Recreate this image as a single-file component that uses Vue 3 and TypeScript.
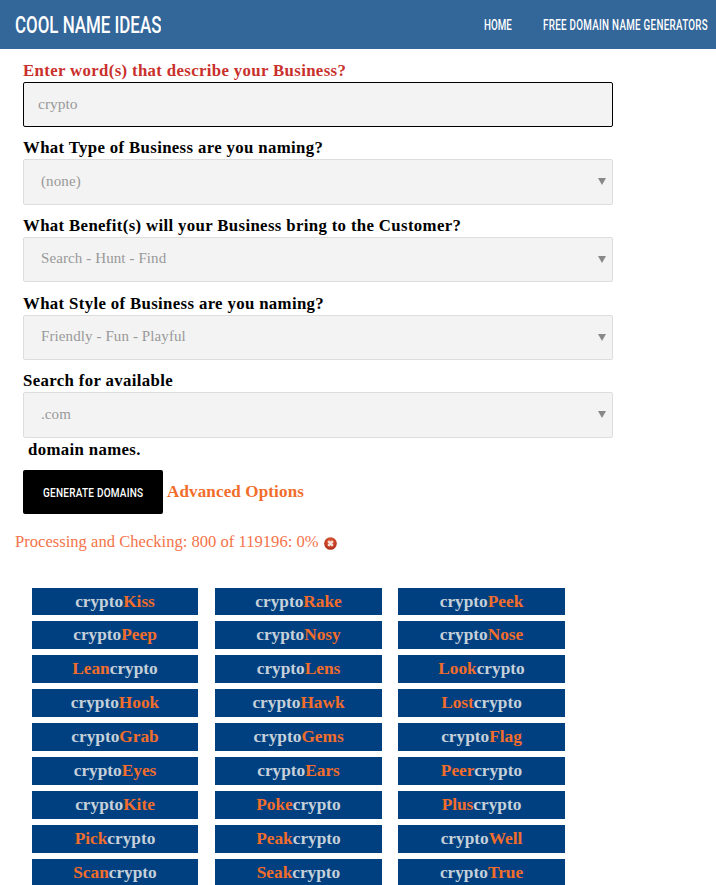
<script setup lang="ts">
interface Name { pre: string; hot: string; after: string }
const raw: string[] = [
  'crypto|Kiss', 'crypto|Rake', 'crypto|Peek',
  'crypto|Peep', 'crypto|Nosy', 'crypto|Nose',
  'Lean|crypto', 'crypto|Lens', 'Look|crypto',
  'crypto|Hook', 'crypto|Hawk', 'Lost|crypto',
  'crypto|Grab', 'crypto|Gems', 'crypto|Flag',
  'crypto|Eyes', 'crypto|Ears', 'Peer|crypto',
  'crypto|Kite', 'Poke|crypto', 'Plus|crypto',
  'Pick|crypto', 'Peak|crypto', 'crypto|Well',
  'Scan|crypto', 'Seak|crypto', 'crypto|True',
]
const names: Name[] = raw.map((r) => {
  const [a, b] = r.split('|')
  return a === 'crypto' ? { pre: a, hot: b, after: '' } : { pre: '', hot: a, after: b }
})
const selects = [
  { label: 'What Type of Business are you naming?', value: '(none)', cls: 'h46', lc: '' },
  { label: 'What Benefit(s) will your Business bring to the Customer?', value: 'Search - Hunt - Find', cls: 'h45', lc: '' },
  { label: 'What Style of Business are you naming?', value: 'Friendly - Fun - Playful', cls: 'h45', lc: 'plus' },
]
</script>

<template>
  <div class="page">
    <header class="bar">
      <a class="brand"><span>COOL NAME IDEAS</span></a>
      <nav class="nav">
        <a class="home"><span>HOME</span></a>
        <a class="free"><span>FREE DOMAIN NAME GENERATORS</span></a>
      </nav>
    </header>
    <form class="form" @submit.prevent>
      <label class="label first">Enter word(s) that describe your Business?</label>
      <input class="text" value="crypto" />
      <template v-for="s in selects" :key="s.label">
        <label class="label" :class="s.lc">{{ s.label }}</label>
        <div class="select" :class="s.cls"><span>{{ s.value }}</span></div>
      </template>
      <label class="label last">Search for available</label>
      <div class="select h46"><span>.com</span></div>
      <div class="suffix">domain names.</div>
      <div class="actions">
        <button class="go" type="button"><span>GENERATE DOMAINS</span></button>
        <a class="adv">Advanced Options</a>
      </div>
    </form>
    <div class="status">
      <span>Processing and Checking: 800 of 119196: 0%</span>
      <svg class="stop" width="13" height="13" viewBox="0 0 14 14">
        <defs>
          <radialGradient id="stopFill" cx="50%" cy="35%" r="70%">
            <stop offset="0" stop-color="#e8603c" />
            <stop offset="1" stop-color="#a82a14" />
          </radialGradient>
        </defs>
        <circle cx="7" cy="7" r="6.8" fill="url(#stopFill)" />
        <path d="M4.5 4.5l5 5M9.5 4.5l-5 5" stroke="#f4e4dc" stroke-width="2.6" />
      </svg>
    </div>
    <div class="grid">
      <div v-for="n in names" :key="n.pre + n.hot + n.after" class="name">
        {{ n.pre }}<span class="hot">{{ n.hot }}</span>{{ n.after }}
      </div>
    </div>
  </div>
</template>

<style scoped>
.page { width: 716px; font-family: "Liberation Serif", serif; }
.bar {
  height: 49px; background: #336699; color: #fff; display: flex;
  align-items: center; justify-content: space-between; padding: 0 8px 0 15px; box-sizing: border-box;
}
.brand, .nav a, .go span { font-family: "Roboto", sans-serif; white-space: nowrap; }
.brand span, .nav span, .go span { display: inline-block; transform-origin: left center; }
.brand, .home, .free { overflow: hidden; }
.brand { font-size: 24.5px; width: 146px; font-weight: 500; }
.brand span { transform: scaleX(0.69); }
.nav { display: flex; gap: 31px; font-size: 14px; font-weight: 500; }
.home { width: 28px; }
.free { width: 165px; letter-spacing: 0.42px; }
.nav span { transform: scaleX(0.7); }
.form { padding: 0 0 0 23px; width: 590px; }
.label {
  display: block; font: 700 16.8px/22px "Liberation Serif", serif; letter-spacing: 0.35px; color: #000;
  height: 22px; margin-top: 10px;
}
.label.first { color: #c9302c; margin-top: 10px; height: 23px; line-height: 23px; }
.label.plus { margin-top: 11px; }
.label.last { margin-top: 10px; }
.text {
  display: block; width: 590px; height: 45px; box-sizing: border-box; margin: 0;
  border: 1px solid #000; border-radius: 2px; background: #f3f3f3; padding: 0 14px 2px;
  font: 15.5px "Liberation Serif", serif; color: #999; outline: none;
}
.select {
  position: relative; box-sizing: border-box; border: 1px solid #ddd; border-radius: 2px;
  background: #f3f3f3; padding: 0 17px 2px; display: flex; align-items: center;
  font: 15px "Liberation Serif", serif; letter-spacing: 0.1px; color: #999;
}
.h46 { height: 46px; }
.h45 { height: 45px; }
.select::after {
  content: ""; position: absolute; right: 6px; top: 18px;
  border: 4px solid transparent; border-top: 7px solid #888; border-bottom: 0;
}
.suffix { font: 700 16.8px "Liberation Serif", serif; letter-spacing: 0.35px; color: #000; margin: 0 0 0 5px; height: 32px; line-height: 24px; }
.actions { display: flex; align-items: center; gap: 4px; }
.go {
  width: 140px; height: 44px; background: #000; color: #fff; border: 0; border-radius: 2px;
  font-size: 13px; font-weight: 500; cursor: pointer; padding: 0 0 0 20px; text-align: left; overflow: hidden;
}
.go span { transform: scaleX(0.77); letter-spacing: 0.3px; white-space: nowrap; }
.adv { color: #f26d2b; font: 700 17px "Liberation Serif", serif; letter-spacing: 0.15px; }
.status {
  margin: 17px 0 0 15px; display: flex; align-items: center; gap: 5px;
  color: #f4734a; font: 16.6px/22px "Liberation Serif", serif; height: 22px;
}
.stop { margin-top: 2px; }
.grid {
  display: grid; grid-template-columns: 166px 167px 167px; column-gap: 17px; row-gap: 6px;
  margin: 35px 0 0 32px;
}
.grid > :nth-child(3n) { margin: 0 1px 0 -1px; }
.name {
  height: 28px; background: #004080; color: #c5d0da; text-align: center;
  font: 700 17.3px/27px "Liberation Serif", serif;
}
.grid > :nth-child(-n+3) { height: 27px; }
.hot { color: #f26d2b; }
</style>

<style>
html, body { overflow: hidden; background: #fff; }
</style>
